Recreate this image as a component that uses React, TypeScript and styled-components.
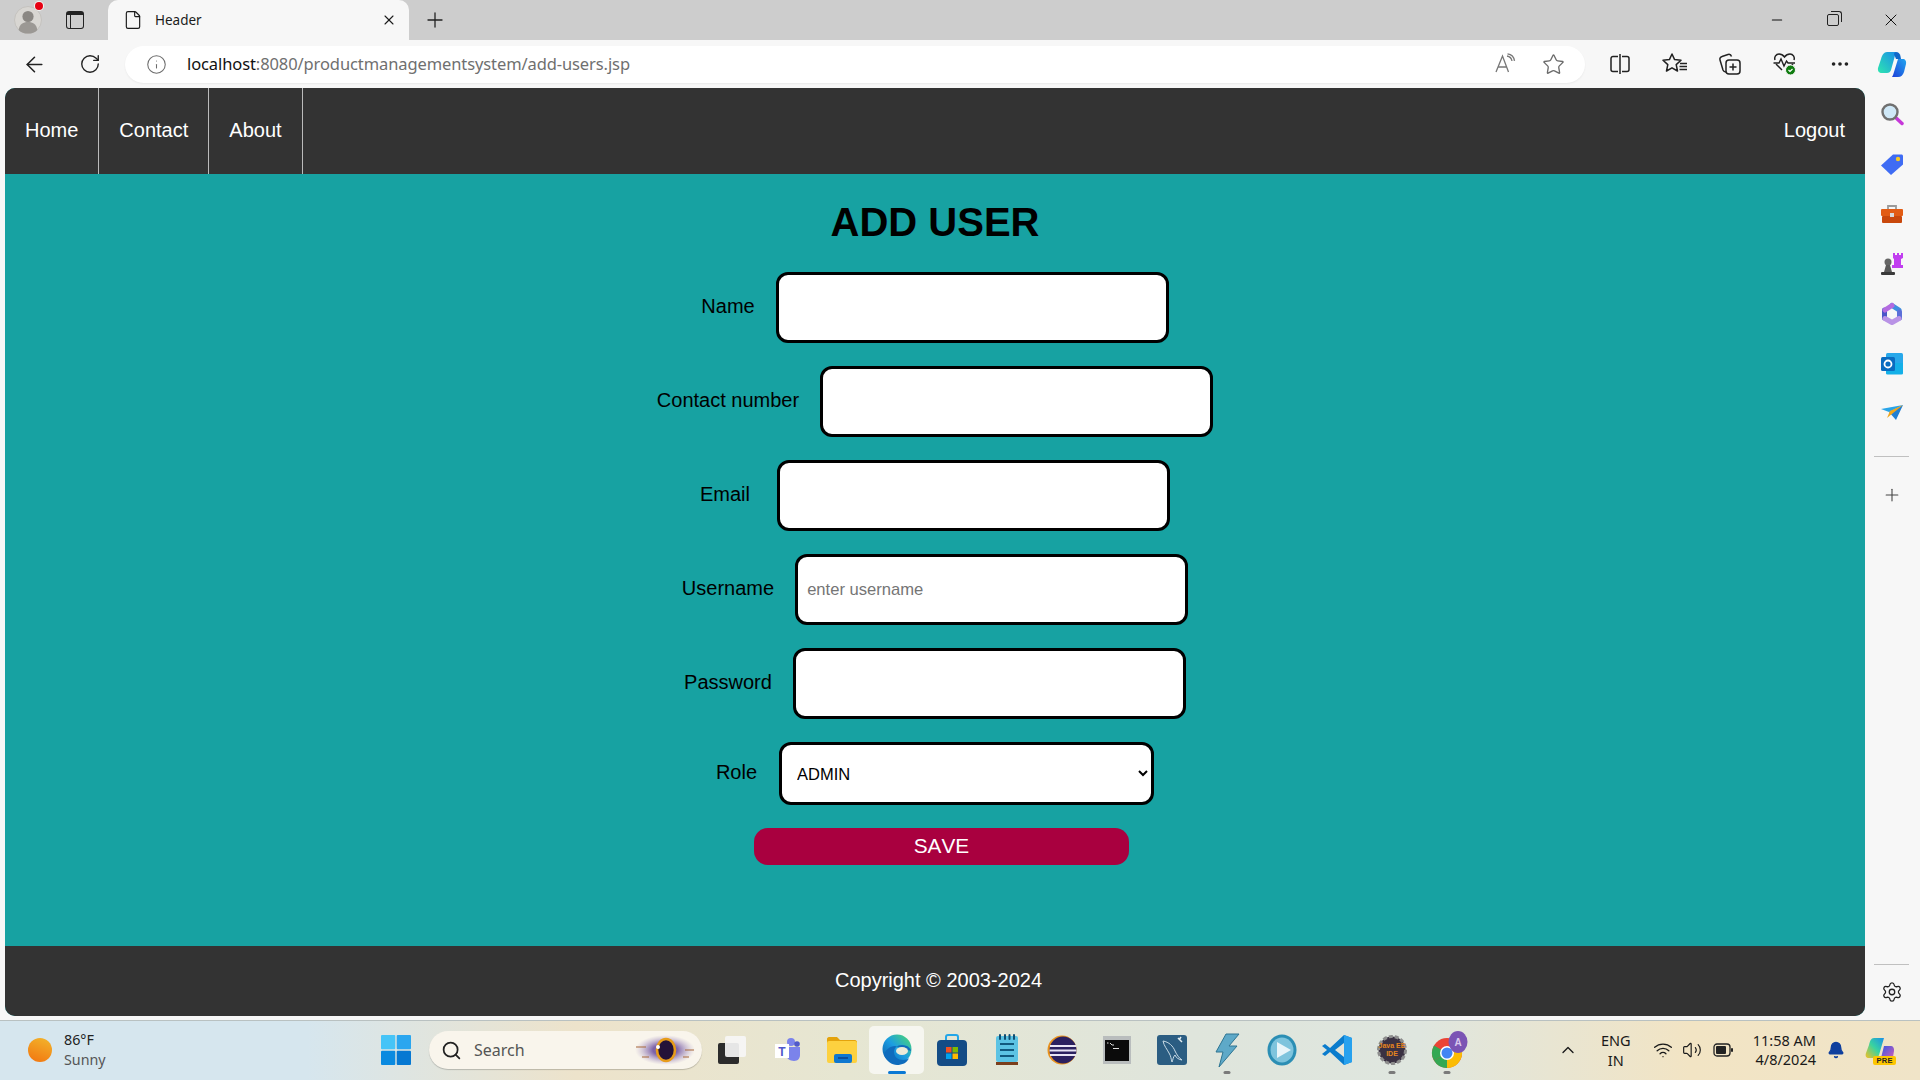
import React from "react";
import styled, { createGlobalStyle } from "styled-components";
import {
  ArrowLeft,
  RotateCw,
  Info,
  Star,
  File,
  X,
  Plus,
  Minus,
  Settings,
  ChevronUp,
  Search,
  Wifi,
  Volume2,
  Bell,
  MoreHorizontal,
} from "lucide-react";

const GlobalStyle = createGlobalStyle`
  html, body {
    margin: 0;
    padding: 0;
    background: #f7f7f7;
    overflow: hidden;
  }
  * { box-sizing: border-box; }
`;

const Screen = styled.div`
  width: 1920px;
  height: 1080px;
  display: flex;
  flex-direction: column;
  overflow: hidden;
  background: #f7f7f7;
  font-family: "Liberation Sans", Arial, sans-serif;
`;

/* browser chrome */
const TabStrip = styled.div`
  height: 40px;
  flex: none;
  display: flex;
  align-items: center;
  background: #cdcdcd;
`;
const ProfileButton = styled.div`
  position: relative;
  width: 28px;
  height: 28px;
  margin-left: 14px;
`;
const ProfileDot = styled.span`
  position: absolute;
  top: -4px;
  right: -1px;
  width: 8px;
  height: 8px;
  border-radius: 50%;
  background: #e60012;
  box-shadow: 0 0 0 1px #f3f3f3;
`;
const TabActions = styled.div`
  width: 18px;
  height: 18px;
  margin-left: 24px;
  border: 1.6px solid #222;
  border-top-width: 4px;
  border-radius: 3px;
  position: relative;
  &::after {
    content: "";
    position: absolute;
    left: 3px;
    top: 0;
    bottom: 0;
    border-left: 1.4px solid #222;
  }
`;
const Tab = styled.div`
  width: 301px;
  height: 40px;
  margin-left: 24px;
  padding: 0 12px 0 15px;
  display: flex;
  align-items: center;
  background: #f7f7f7;
  border-radius: 10px 10px 0 0;
  color: #1b1b1b;
`;
const TabTitle = styled.span`
  flex: 1;
  margin-left: 12px;
  font-family: "Noto Sans", sans-serif;
  font-size: 13.5px;
`;
const NewTab = styled.div`
  margin-left: 14px;
  display: flex;
  color: #222;
`;
const WindowControls = styled.div`
  margin-left: auto;
  padding-right: 1px;
  display: flex;
  color: #111;
`;
const WindowButton = styled.div`
  width: 57px;
  height: 40px;
  display: flex;
  align-items: center;
  justify-content: center;
`;
const RestoreGlyph = styled.div`
  width: 12px;
  height: 12px;
  margin-right: 2px;
  border: 1.2px solid #222;
  border-radius: 2px;
  position: relative;
  &::after {
    content: "";
    position: absolute;
    top: -4px;
    right: -4px;
    width: 10px;
    height: 10px;
    border-top: 1.2px solid #222;
    border-right: 1.2px solid #222;
    border-radius: 0 3px 0 0;
  }
`;

const Toolbar = styled.div`
  height: 48px;
  flex: none;
  display: flex;
  align-items: center;
  background: #f7f7f7;
  color: #222;
`;
const NavIcon = styled.div`
  width: 55px;
  flex: none;
  display: flex;
  justify-content: center;
`;
const BackSlot = styled(NavIcon)`
  margin-left: 7px;
`;
const AddressBar = styled.div`
  width: 1460px;
  height: 37px;
  margin-left: 8px;
  padding: 0 0 0 21px;
  display: flex;
  align-items: center;
  background: #fff;
  border-radius: 19px;
  box-shadow: 0 1px 2px rgba(0, 0, 0, 0.06);
  color: #6b6b6b;
`;
const UrlText = styled.span`
  margin-left: 20px;
  padding-bottom: 2px;
  font-family: "Noto Sans", sans-serif;
  font-size: 16.5px;
  letter-spacing: -0.1px;
  color: #6f6f6f;
  b {
    font-weight: 400;
    color: #111;
  }
`;
const AddressTools = styled.div`
  margin-left: auto;
  margin-right: 20px;
  display: flex;
  align-items: center;
  gap: 26px;
`;
const ToolbarTools = styled.div`
  margin-left: 7px;
  display: flex;
  align-items: center;
`;
const LastTool = styled(NavIcon)`
  margin-left: -3px;
`;

/* the app page */
const Body = styled.div`
  flex: 1;
  display: flex;
  min-height: 0;
`;
const Page = styled.div`
  width: 1860px;
  height: 928px;
  margin-left: 5px;
  display: flex;
  flex-direction: column;
  border-radius: 10px;
  overflow: hidden;
  background: #17a2a2;
`;
const Navbar = styled.nav`
  height: 86px;
  flex: none;
  display: flex;
  background: #333;
`;
const NavLink = styled.a<{ $plain?: boolean }>`
  display: flex;
  align-items: center;
  padding: 0 20px 2px;
  font-size: 20px;
  color: #fff;
  border-right: ${(p) => (p.$plain ? "none" : "1px solid #bbb")};
  margin-left: ${(p) => (p.$plain ? "auto" : "0")};
`;
const Main = styled.main`
  flex: 1;
  display: flex;
  flex-direction: column;
  align-items: center;
  padding-top: 24px;
`;
const Title = styled.h1`
  margin: 0 0 25px;
  font-size: 40px;
  line-height: 49px;
  font-weight: 700;
  color: #000;
`;
const Form = styled.form`
  display: flex;
  flex-direction: column;
  align-items: center;
  gap: 23px;
`;
const Row = styled.div<{ $gap?: number }>`
  display: flex;
  align-items: center;
  gap: ${(p) => p.$gap ?? 21}px;
`;
const Label = styled.label`
  font-size: 20px;
  color: #000;
  margin-bottom: 2px;
`;
const TextInput = styled.input`
  width: 393px;
  height: 71px;
  padding: 0 9px;
  background: #fff;
  border: 3px solid #000;
  border-radius: 12px;
  outline: none;
  font-family: inherit;
  font-size: 16.6px;
  &::placeholder {
    color: #757575;
  }
`;
const RoleSelect = styled.select`
  width: 375px;
  height: 63px;
  padding: 0 11px;
  background: #fff;
  border: 3px solid #000;
  border-radius: 12px;
  outline: none;
  font-family: inherit;
  font-size: 16.5px;
  color: #000;
`;
const SaveButton = styled.button`
  width: 375px;
  height: 37px;
  margin: 23px 0 0 13px;
  padding: 0 0 2px;
  background: #a9003f;
  border: none;
  border-radius: 14px;
  font-family: inherit;
  font-size: 20.8px;
  font-kerning: none;
  color: #fff;
`;
const Footer = styled.footer`
  height: 70px;
  flex: none;
  display: flex;
  align-items: center;
  justify-content: center;
  padding: 0 0 2px 7px;
  background: #333;
  font-size: 20px;
  color: #fff;
`;

/* edge sidebar */
const Sidebar = styled.aside`
  flex: 1;
  display: flex;
  flex-direction: column;
  align-items: center;
  padding: 1px 2px 3px 0;
`;
const SideIcon = styled.div`
  width: 50px;
  height: 50px;
  flex: none;
  display: flex;
  align-items: center;
  justify-content: center;
`;
const SideRule = styled.div<{ $auto?: boolean }>`
  width: 35px;
  flex: none;
  margin-top: ${(p) => (p.$auto ? "auto" : "17px")};
  margin-bottom: ${(p) => (p.$auto ? "2px" : "13px")};
  border-top: 1px solid #c0c0c0;
`;

/* windows taskbar */
const Taskbar = styled.div`
  height: 60px;
  flex: none;
  display: flex;
  align-items: center;
  padding-bottom: 1px;
  border-top: 1px solid #b9c1c1;
  background: linear-gradient(
    90deg,
    #d6e6ee 0%,
    #d6e6ee 16%,
    #ede3cb 30%,
    #e6e6d2 44%,
    #dfe5dc 62%,
    #dfe6df 74%,
    #f2e4c4 88%,
    #f0e4c8 100%
  );
  color: #1a1a1a;
`;
const Weather = styled.div`
  width: 381px;
  flex: none;
  display: flex;
  align-items: center;
  padding-left: 28px;
`;
const SunDot = styled.div`
  width: 24px;
  height: 24px;
  border-radius: 50%;
  background: linear-gradient(200deg, #f2b62c, #f2740f);
`;
const WeatherText = styled.div`
  margin-left: 12px;
  font-family: "Noto Sans", sans-serif;
  font-size: 14.3px;
  line-height: 20px;
  color: #222;
  span {
    display: block;
    color: #555;
  }
`;
const SearchBox = styled.div`
  position: relative;
  width: 273px;
  height: 38px;
  flex: none;
  margin-left: 18px;
  padding-left: 12px;
  display: flex;
  align-items: center;
  background: #f9f5ec;
  border-radius: 19px;
  box-shadow: 0 1px 1px rgba(0, 0, 0, 0.2);
`;
const SearchText = styled.span`
  margin-left: 12px;
  font-family: "Noto Sans", sans-serif;
  font-size: 16px;
  color: #555;
`;
const SearchArt = styled.div`
  position: absolute;
  right: 7px;
  top: 4px;
  display: flex;
`;
const TaskIcons = styled.div`
  display: flex;
  align-items: center;
  margin-left: 2px;
`;
const TaskSlot = styled.div<{ $active?: boolean; $running?: boolean }>`
  position: relative;
  width: 55px;
  height: 48px;
  flex: none;
  display: flex;
  align-items: center;
  justify-content: center;
  border-radius: 5px;
  background: ${(p) => (p.$active ? "rgba(255,255,255,.65)" : "transparent")};
  &::after {
    content: "";
    display: ${(p) => (p.$active || p.$running ? "block" : "none")};
    position: absolute;
    bottom: 0;
    left: 50%;
    transform: translateX(-50%);
    width: ${(p) => (p.$active ? "18px" : "7px")};
    height: 3px;
    border-radius: 2px;
    background: ${(p) => (p.$active ? "#0a78d4" : "#7a7a7a")};
  }
`;
const Tray = styled.div`
  margin-left: auto;
  display: flex;
  align-items: center;
`;
const TrayIcon = styled.div<{ $gap: number }>`
  display: flex;
  margin-left: ${(p) => p.$gap}px;
`;
const LangBlock = styled.div`
  width: 40px;
  margin-left: 18px;
  text-align: center;
  font-family: "Noto Sans", sans-serif;
  font-size: 14.5px;
  line-height: 20px;
`;
const Clock = styled.div`
  margin-left: 20px;
  text-align: right;
  font-family: "Noto Sans", sans-serif;
  font-size: 14.5px;
  line-height: 19px;
  white-space: nowrap;
`;
const CopilotPre = styled.div`
  position: relative;
  display: flex;
  margin: 0 25px 0 20px;
`;
const PreBadge = styled.span`
  position: absolute;
  right: -1px;
  bottom: -2px;
  padding: 0 3px;
  background: #fdc600;
  border-radius: 2px;
  font-size: 7.5px;
  line-height: 9px;
  font-weight: 700;
  letter-spacing: 0.4px;
  color: #222;
`;
const ChipText = styled.text`
  font-family: "Liberation Sans", sans-serif;
  font-weight: 700;
`;

const Avatar = () => (
  <svg width="28" height="28" viewBox="0 0 28 28">
    <circle cx="14" cy="14" r="13.5" fill="#d8d6d2" stroke="#c4c2be" />
    <circle cx="14" cy="10.5" r="5.6" fill="#8a8783" />
    <path d="M4.6 24c1-6 4.6-8 9.4-8s8.4 2 9.4 8c-2.4 2.6-5.6 3.6-9.4 3.6S7 26.6 4.6 24z" fill="#9b9894" />
  </svg>
);
const ReadAloud = () => (
  <svg width="22" height="22" viewBox="0 0 22 22" fill="none" stroke="#777" strokeWidth="1.3">
    <path d="M2 19 8.5 3l6 16M4.5 14h8" />
    <path d="M13 3c3 .5 4.5 2 5 5M13.5 .8c4 .5 6.5 3 7 7" />
  </svg>
);
const SplitIcon = () => (
  <svg width="22" height="22" viewBox="0 0 22 22" fill="none" stroke="#222" strokeWidth="1.5">
    <path d="M9 3.5H4a2 2 0 0 0-2 2v11a2 2 0 0 0 2 2h5M13 3.5h5a2 2 0 0 1 2 2v11a2 2 0 0 1-2 2h-5M11 1v20" />
  </svg>
);
const FavoritesIcon = () => (
  <svg width="26" height="24" viewBox="0 0 26 24" fill="none" stroke="#222" strokeWidth="1.5" strokeLinejoin="round">
    <path d="M10 2 12.6 7.6 19 8.3 14.2 12.6 15.5 19 10 15.8 4.5 19 5.8 12.6 1 8.3 7.4 7.6z" />
    <path d="M18 11.5h7M17.5 14.5h7.5M17.5 17.5h7.5" />
  </svg>
);
const CollectionsIcon = () => (
  <svg width="24" height="24" viewBox="0 0 24 24" fill="none" stroke="#222" strokeWidth="1.5">
    <rect x="8" y="8" width="14" height="14" rx="3" />
    <path d="M15 11.5v7M11.5 15h7M8 20c-1.5 0-2.5-.7-3-2L2 8c-.5-1.5.3-3 2-3.5l6-2c1.5-.4 3 .3 3.5 2" />
  </svg>
);
const HealthIcon = () => (
  <svg width="26" height="26" viewBox="0 0 26 26" fill="none">
    <path d="M3 9c-1-3 1-6 4-6 2 0 4 1 5.5 3C14 4 16 3 18 3c3 0 5 3 4 6M4 13l6 6M21 13l-4 4" stroke="#222" strokeWidth="1.5" />
    <path d="M1.5 12H7l2-4 3 7 2.5-5 1.5 2h7" stroke="#222" strokeWidth="1.4" />
    <circle cx="18.5" cy="19" r="5" fill="#107c10" stroke="#f7f7f7" />
    <path d="m16.5 19 1.5 1.5 2.5-2.5" stroke="#fff" strokeWidth="1.2" />
  </svg>
);
const CopilotIcon = () => (
  <svg width="30" height="30" viewBox="0 0 30 30">
    <defs>
      <linearGradient id="cpA" x1="0" y1="1" x2="1" y2="0">
        <stop offset="0" stopColor="#2ee6b0" />
        <stop offset="1" stopColor="#1a8fe8" />
      </linearGradient>
      <linearGradient id="cpB" x1="0" y1="1" x2="1" y2="0">
        <stop offset="0" stopColor="#1d3fd8" />
        <stop offset="1" stopColor="#22a6f0" />
      </linearGradient>
    </defs>
    <path d="M10 3h9l-5 18c-.6 2-2 3-4 3H5c-3 0-4.5-2-4-5l3-9c1-4 3-7 6-7z" fill="url(#cpA)" />
    <path d="M15 28h6c3 0 5-2 6-5l2-8c.7-3-1-5-3-5h-5l-4 13c-.6 2-1.2 4-2 5z" fill="url(#cpB)" />
    <path d="M19 3c2.4 0 3.7 1.5 4.4 3.8L24 10h-5l-2-5c.4-1.2 1-2 2-2z" fill="#1167c9" />
  </svg>
);

const MagnifierIcon = () => (
  <svg width="24" height="24" viewBox="0 0 24 24">
    <path d="m14 14 8 7.5" stroke="#c638d9" strokeWidth="3.5" strokeLinecap="round" />
    <circle cx="10" cy="10" r="7.5" fill="#cfe8f7" stroke="#707070" strokeWidth="2.4" />
  </svg>
);
const TagIcon = () => (
  <svg width="24" height="24" viewBox="0 0 24 24">
    <path d="M1 13.5 13 2.5h8.5c.8 0 1.5.7 1.5 1.5v8.5L11 23z" fill="#3f6cf4" />
    <circle cx="18" cy="7" r="2.2" fill="#f6c927" />
  </svg>
);
const ToolboxIcon = () => (
  <svg width="24" height="22" viewBox="0 0 24 22">
    <path d="M8 6V3h8v3" fill="none" stroke="#9a9a9a" strokeWidth="1.8" />
    <rect x="1" y="6" width="22" height="7" rx="1" fill="#e25c14" />
    <rect x="2" y="13" width="20" height="7" rx="1" fill="#c9480c" />
    <rect x="10" y="10" width="4" height="4" fill="#d8d8d8" />
  </svg>
);
const ChessIcon = () => (
  <svg width="24" height="24" viewBox="0 0 24 24">
    <path d="M13 1h2v2h2V1h2v2h2V1h2v5l-2 1v6h2v3H12v-3h2V7l-1-1z" fill="#c13ef0" />
    <circle cx="8" cy="10" r="3.5" fill="#666" />
    <path d="M6 13h4l2 7H4z" fill="#5a5a5a" />
    <rect x="1" y="20" width="14" height="3" rx="1" fill="#3a3a3a" />
  </svg>
);
const M365Icon = () => (
  <svg width="24" height="26" viewBox="0 0 24 26" fill="none">
    <path d="M12 4.5 19 9" stroke="#3f8fe0" strokeWidth="5" strokeLinecap="round" />
    <path d="M4.5 9v8" stroke="#4a55c8" strokeWidth="5" strokeLinecap="round" />
    <path d="M5 9 12 4.5" stroke="#b36be0" strokeWidth="5" strokeLinecap="round" />
    <path d="M19.5 11v6" stroke="#5c6fd8" strokeWidth="5" strokeLinecap="round" />
    <path d="M5 17.5 12 21.5 19 17.5" stroke="#b993e6" strokeWidth="5" strokeLinecap="round" strokeLinejoin="round" />
  </svg>
);
const OutlookIcon = () => (
  <svg width="24" height="24" viewBox="0 0 24 24">
    <rect x="6" y="1" width="17" height="21" rx="1.5" fill="#28a8ea" />
    <path d="M6 11h17v10a1.5 1.5 0 0 1-1.5 1.5h-14A1.5 1.5 0 0 1 6 21z" fill="#14b0e8" />
    <rect x="1" y="5" width="14" height="14" rx="1.5" fill="#0a6cc0" />
    <circle cx="8" cy="12" r="3.5" fill="none" stroke="#fff" strokeWidth="1.8" />
  </svg>
);
const PaperPlaneIcon = () => (
  <svg width="24" height="20" viewBox="0 0 24 20">
    <path d="M1 5 23 1 9 8z" fill="#28a4e8" />
    <path d="M9 8 23 1l-7 15z" fill="#1f7fd4" />
    <path d="M7 14 23 1 10 7z" fill="#f2a71b" />
  </svg>
);
const StartIcon = () => (
  <svg width="30" height="30" viewBox="0 0 30 30">
    <rect x="0" y="0" width="14.3" height="14.3" rx="1" fill="#45c4f7" />
    <rect x="15.7" y="0" width="14.3" height="14.3" rx="1" fill="#2aa6ef" />
    <rect x="0" y="15.7" width="14.3" height="14.3" rx="1" fill="#0a8ae0" />
    <rect x="15.7" y="15.7" width="14.3" height="14.3" rx="1" fill="#0678d2" />
  </svg>
);
const EclipseBanner = () => (
  <svg width="60" height="30" viewBox="0 0 60 30">
    <defs>
      <radialGradient id="haze">
        <stop offset="0.4" stopColor="#7d63a8" />
        <stop offset="1" stopColor="#b9a8cc" stopOpacity="0" />
      </radialGradient>
    </defs>
    <ellipse cx="30" cy="15" rx="30" ry="15" fill="url(#haze)" />
    <ellipse cx="31" cy="15" rx="9" ry="11" fill="#241238" stroke="#e79c1a" strokeWidth="2.6" />
    <circle cx="23" cy="12" r="2" fill="#fff" />
    <path d="M1 12h10M50 15h9M7 22h7M48 22h6" stroke="#a8683a" strokeWidth="1.2" />
  </svg>
);
const TaskViewIcon = () => (
  <svg width="30" height="30" viewBox="0 0 30 30">
    <rect x="1" y="8" width="21" height="21" rx="2" fill="#2c2c2c" />
    <rect x="8" y="1" width="21" height="21" rx="2" fill="#f6f6f6" fillOpacity=".92" />
  </svg>
);
const TeamsIcon = () => (
  <svg width="26" height="26" viewBox="0 0 26 26">
    <circle cx="17" cy="5" r="4" fill="#7b83eb" />
    <circle cx="23" cy="7" r="2.8" fill="#5059c9" />
    <path d="M12 10h14v8c0 3-2 6-6 6s-8-3-8-6z" fill="#7b83eb" />
    <rect x="1" y="7" width="14" height="14" fill="#fff" />
    <ChipText x="8" y="18.5" fontSize="12" textAnchor="middle" fill="#4f58ca">T</ChipText>
  </svg>
);
const FolderIcon = () => (
  <svg width="32" height="28" viewBox="0 0 32 28">
    <path d="M1 3c0-1 .8-2 2-2h8l3 3h15c1 0 2 1 2 2v3H1z" fill="#e4a30c" />
    <rect x="1" y="5" width="30" height="22" rx="2" fill="#fdd13f" />
    <rect x="8" y="18" width="18" height="9" rx="2" fill="#0f78d0" />
    <rect x="12" y="21" width="10" height="2" fill="#0d4f9a" />
  </svg>
);
const EdgeIcon = () => (
  <svg width="30" height="32" viewBox="0 0 30 32">
    <defs>
      <linearGradient id="edgeG" x1="0" y1="1" x2="1" y2="0">
        <stop offset="0" stopColor="#0c59a4" />
        <stop offset="0.5" stopColor="#1b9de2" />
        <stop offset="1" stopColor="#4fdc6a" />
      </linearGradient>
    </defs>
    <circle cx="15" cy="15" r="14.5" fill="url(#edgeG)" />
    <path d="M29 17c0-2-3-6-9-6-5 0-8 3-8 7 0 5 4 8 9 8 3 0 5-.7 6-2-2 5-7 7-12 7-5 0-11-4-13-10 1-5 6-9 11-9" fill="#0f6cbd" />
    <ellipse cx="20" cy="17" rx="6" ry="4" fill="#ecebd9" />
  </svg>
);
const StoreIcon = () => (
  <svg width="30" height="32" viewBox="0 0 30 32">
    <path d="M9 7V3c0-1 1-2 2-2h8c1 0 2 1 2 2v4" fill="none" stroke="#23a6e8" strokeWidth="2" />
    <rect x="0" y="6" width="30" height="26" rx="4" fill="#144c86" />
    <rect x="9" y="13" width="5.5" height="5.5" fill="#f25022" />
    <rect x="15.5" y="13" width="5.5" height="5.5" fill="#7fba00" />
    <rect x="9" y="19.5" width="5.5" height="5.5" fill="#00a4ef" />
    <rect x="15.5" y="19.5" width="5.5" height="5.5" fill="#ffb900" />
  </svg>
);
const NotepadIcon = () => (
  <svg width="24" height="32" viewBox="0 0 24 32">
    <rect x="1" y="2" width="22" height="26" rx="2" fill="#5cc3e4" />
    <rect x="1" y="28" width="22" height="3" fill="#7b3f1d" />
    <path d="M5 10h14M5 16h14M5 22h14" stroke="#11597e" strokeWidth="2" />
    <path d="M5 1v4M10 1v4M14.5 1v4M19 1v4" stroke="#0f4d72" strokeWidth="2" strokeLinecap="round" />
  </svg>
);
const EclipseIcon = () => (
  <svg width="30" height="30" viewBox="0 0 30 30">
    <circle cx="15" cy="15" r="14.5" fill="#e8921f" />
    <circle cx="16" cy="15" r="13.5" fill="#2b2060" />
    <path d="M3 11h26M2.5 15.5h27M3 20h26" stroke="#e8e4f4" strokeWidth="2.2" />
  </svg>
);
const TerminalIcon = () => (
  <svg width="28" height="28" viewBox="0 0 28 28">
    <rect x="0" y="0" width="28" height="28" fill="#b9bdbd" />
    <rect x="2" y="4" width="24" height="21" fill="#0b0b0b" />
    <path d="M4 7h1.5M7 7l2 2h2" stroke="#ddd" strokeWidth="1" fill="none" />
    <rect x="10" y="12" width="6" height="1" fill="#ddd" />
  </svg>
);
const MysqlIcon = () => (
  <svg width="30" height="32" viewBox="0 0 30 32">
    <rect x="0" y="1" width="30" height="30" rx="3" fill="#2b5d82" />
    <path d="M6 7c6 1 10 5 12 10 2 4 4 7 7 9-3-.5-6-2-7-5-2 2-2 5-3 7-1-3-1-6-3-9-2-4-5-7-6-12z" fill="none" stroke="#c9dbe6" strokeWidth="1" />
    <path d="m21 4 4 4M24 3l-2 3" stroke="#e4eef3" strokeWidth="1.5" />
  </svg>
);
const BoltIcon = () => (
  <svg width="26" height="36" viewBox="0 0 26 36">
    <path d="M12 2h13L15 14h8L5 35l4-15H2z" fill="#5ea9c8" stroke="#2e7592" strokeWidth="1" />
  </svg>
);
const PlayIcon = () => (
  <svg width="30" height="32" viewBox="0 0 30 32">
    <ellipse cx="15" cy="16" rx="14.5" ry="15.5" fill="#2b8eb4" />
    <ellipse cx="15" cy="16" rx="11.5" ry="12.5" fill="#7ec4dd" />
    <path d="M10 8 24 16 10 24z" fill="#e8f5f9" />
  </svg>
);
const VsCodeIcon = () => (
  <svg width="30" height="32" viewBox="0 0 30 32">
    <path d="M22 1 8 14 3 10 0 12l5 4-5 4 3 2 5-4 14 13 8-3V4z" fill="#0a7ccd" />
    <path d="M22 1v30l8-3V4z" fill="#27a1ee" />
    <path d="m22 9-9 7 9 7z" fill="#e3e4d9" />
  </svg>
);
const JavaIdeIcon = () => (
  <svg width="30" height="32" viewBox="0 0 30 32">
    <circle cx="15" cy="16" r="13.5" fill="#3a3142" stroke="#8d8d8d" strokeWidth="3" strokeDasharray="4 2" />
    <ChipText x="15" y="14" fontSize="7" textAnchor="middle" fill="#e6851e">Java EE</ChipText>
    <ChipText x="15" y="22" fontSize="7" textAnchor="middle" fill="#e6851e">IDE</ChipText>
  </svg>
);
const ChromeIcon = () => (
  <svg width="42" height="38" viewBox="-6 0 42 38">
    <circle cx="15" cy="22" r="15" fill="#ea4335" />
    <path d="M15 22 2 29.5A15 15 0 0 0 15 37z" fill="#34a853" />
    <path d="M15 22v15a15 15 0 0 0 13-22.5z" fill="#fbbc05" />
    <path d="M2 29.5a15 15 0 0 1 0-15L15 22z" fill="#34a853" />
    <circle cx="15" cy="22" r="7" fill="#fff" />
    <circle cx="15" cy="22" r="5.5" fill="#4285f4" />
    <ellipse cx="26" cy="11" rx="9.5" ry="11" fill="#7b54b4" />
    <ChipText x="26" y="15" fontSize="10" textAnchor="middle" fill="#d9c9ee">A</ChipText>
  </svg>
);
const BatteryGlyph = () => (
  <svg width="20" height="14" viewBox="0 0 20 14" fill="none">
    <rect x="1" y="1" width="16" height="12" rx="3" stroke="#222" strokeWidth="1.3" />
    <rect x="3" y="3" width="10" height="8" rx="1" fill="#222" />
    <rect x="18" y="5" width="2" height="4" rx="1" fill="#222" />
  </svg>
);
const CopilotPreIcon = () => (
  <svg width="30" height="26" viewBox="0 0 30 26">
    <defs>
      <linearGradient id="preA" x1="0" y1="1" x2="1" y2="0">
        <stop offset="0" stopColor="#f5c022" />
        <stop offset="0.5" stopColor="#39d3a0" />
        <stop offset="1" stopColor="#1a8fe8" />
      </linearGradient>
      <linearGradient id="preB" x1="0" y1="0" x2="1" y2="1">
        <stop offset="0" stopColor="#2856e8" />
        <stop offset="1" stopColor="#e85fb0" />
      </linearGradient>
    </defs>
    <path d="M9 1h10l-5 17c-.5 2-2 3-4 3H4c-3 0-4-2-3-5l3-8c1-4 2-7 5-7z" fill="url(#preA)" />
    <path d="M14 25h8c3 0 5-2 6-5l1-6c.5-3-1-5-3-5h-7l-3 12z" fill="url(#preB)" />
  </svg>
);

const sideIcons = [
  <MagnifierIcon key="search" />,
  <TagIcon key="tag" />,
  <ToolboxIcon key="tools" />,
  <ChessIcon key="games" />,
  <M365Icon key="m365" />,
  <OutlookIcon key="outlook" />,
  <PaperPlaneIcon key="send" />,
];

const fields: { label: string; placeholder?: string; gap?: number }[] = [
  { label: "Name" },
  { label: "Contact number" },
  { label: "Email", gap: 27 },
  { label: "Username", placeholder: "enter username" },
  { label: "Password" },
];

export default function App() {
  return (
    <Screen>
      <GlobalStyle />
      <TabStrip>
        <ProfileButton>
          <Avatar />
          <ProfileDot />
        </ProfileButton>
        <TabActions />
        <Tab>
          <File size={20} strokeWidth={1.4} />
          <TabTitle>Header</TabTitle>
          <X size={16} strokeWidth={1.6} />
        </Tab>
        <NewTab>
          <Plus size={24} strokeWidth={1.3} />
        </NewTab>
        <WindowControls>
          <WindowButton>
            <Minus size={16} strokeWidth={1.6} />
          </WindowButton>
          <WindowButton>
            <RestoreGlyph />
          </WindowButton>
          <WindowButton>
            <X size={20} strokeWidth={1.2} />
          </WindowButton>
        </WindowControls>
      </TabStrip>
      <Toolbar>
        <BackSlot>
          <ArrowLeft size={25} strokeWidth={1.5} />
        </BackSlot>
        <NavIcon>
          <RotateCw size={22} strokeWidth={1.5} />
        </NavIcon>
        <AddressBar>
          <Info size={21} strokeWidth={1.2} />
          <UrlText>
            <b>localhost</b>:8080/productmanagementsystem/add-users.jsp
          </UrlText>
          <AddressTools>
            <ReadAloud />
            <Star size={23} strokeWidth={1.4} />
          </AddressTools>
        </AddressBar>
        <ToolbarTools>
          <NavIcon>
            <SplitIcon />
          </NavIcon>
          <NavIcon>
            <FavoritesIcon />
          </NavIcon>
          <NavIcon>
            <CollectionsIcon />
          </NavIcon>
          <NavIcon>
            <HealthIcon />
          </NavIcon>
          <NavIcon>
            <MoreHorizontal size={22} strokeWidth={2} />
          </NavIcon>
          <LastTool>
            <CopilotIcon />
          </LastTool>
        </ToolbarTools>
      </Toolbar>
      <Body>
        <Page>
          <Navbar>
            <NavLink>Home</NavLink>
            <NavLink>Contact</NavLink>
            <NavLink>About</NavLink>
            <NavLink $plain>Logout</NavLink>
          </Navbar>
          <Main>
            <Title>ADD USER</Title>
            <Form>
              {fields.map((f) => (
                <Row key={f.label} $gap={f.gap}>
                  <Label>{f.label}</Label>
                  <TextInput placeholder={f.placeholder} />
                </Row>
              ))}
              <Row $gap={22}>
                <Label>Role</Label>
                <RoleSelect defaultValue="ADMIN">
                  <option>ADMIN</option>
                  <option>USER</option>
                </RoleSelect>
              </Row>
            </Form>
            <SaveButton type="button">SAVE</SaveButton>
          </Main>
          <Footer>Copyright © 2003-2024</Footer>
        </Page>
        <Sidebar>
          {sideIcons.map((icon) => (
            <SideIcon key={icon.key}>{icon}</SideIcon>
          ))}
          <SideRule />
          <SideIcon>
            <Plus size={20} strokeWidth={1.3} color="#444" />
          </SideIcon>
          <SideRule $auto />
          <SideIcon>
            <Settings size={22} strokeWidth={1.4} color="#222" />
          </SideIcon>
        </Sidebar>
      </Body>
      <Taskbar>
        <Weather>
          <SunDot />
          <WeatherText>
            86°F
            <span>Sunny</span>
          </WeatherText>
        </Weather>
        <StartIcon />
        <SearchBox>
          <Search size={21} strokeWidth={2} color="#222" />
          <SearchText>Search</SearchText>
          <SearchArt>
            <EclipseBanner />
          </SearchArt>
        </SearchBox>
        <TaskIcons>
          <TaskSlot>
            <TaskViewIcon />
          </TaskSlot>
          <TaskSlot>
            <TeamsIcon />
          </TaskSlot>
          <TaskSlot>
            <FolderIcon />
          </TaskSlot>
          <TaskSlot $active>
            <EdgeIcon />
          </TaskSlot>
          <TaskSlot>
            <StoreIcon />
          </TaskSlot>
          <TaskSlot>
            <NotepadIcon />
          </TaskSlot>
          <TaskSlot>
            <EclipseIcon />
          </TaskSlot>
          <TaskSlot>
            <TerminalIcon />
          </TaskSlot>
          <TaskSlot>
            <MysqlIcon />
          </TaskSlot>
          <TaskSlot $running>
            <BoltIcon />
          </TaskSlot>
          <TaskSlot>
            <PlayIcon />
          </TaskSlot>
          <TaskSlot>
            <VsCodeIcon />
          </TaskSlot>
          <TaskSlot $running>
            <JavaIdeIcon />
          </TaskSlot>
          <TaskSlot $running>
            <ChromeIcon />
          </TaskSlot>
        </TaskIcons>
        <Tray>
          <ChevronUp size={20} strokeWidth={1.6} />
          <LangBlock>
            ENG
            <br />
            IN
          </LangBlock>
          <TrayIcon $gap={17}>
            <Wifi size={20} strokeWidth={1.6} />
          </TrayIcon>
          <TrayIcon $gap={9}>
            <Volume2 size={20} strokeWidth={1.4} />
          </TrayIcon>
          <TrayIcon $gap={11}>
            <BatteryGlyph />
          </TrayIcon>
          <Clock>
            11:58 AM
            <br />
            4/8/2024
          </Clock>
          <TrayIcon $gap={11}>
            <Bell size={18} fill="#0f3f9e" color="#0f3f9e" />
          </TrayIcon>
          <CopilotPre>
            <CopilotPreIcon />
            <PreBadge>PRE</PreBadge>
          </CopilotPre>
        </Tray>
      </Taskbar>
    </Screen>
  );
}
